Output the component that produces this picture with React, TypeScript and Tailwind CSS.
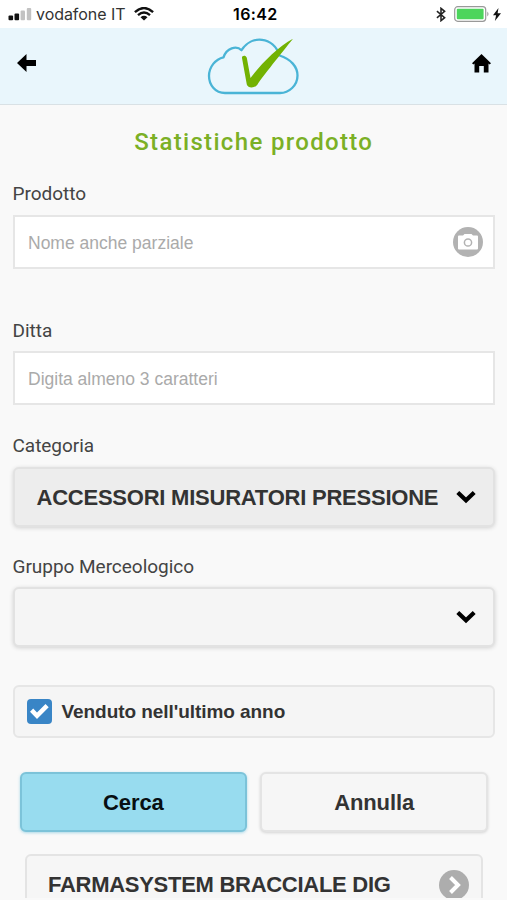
import type { ReactNode } from "react";

const roboto = "font-['Roboto',sans-serif]";

function Label({ children, className }: { children: ReactNode; className: string }) {
  return (
    <label className={`${roboto} block h-6 whitespace-nowrap text-[19px] leading-6 tracking-[-0.03px] text-[#444] ${className}`}>
      {children}
    </label>
  );
}

function StatusBar() {
  return (
    <div className="flex h-7 items-center bg-white pl-2 pr-1.5 text-[#222]">
      <svg className="h-[14px] w-6 shrink-0" viewBox="0 0 24 14">
        <rect x="0.5" y="8.5" width="4.6" height="4.8" rx="1" fill="#111" />
        <rect x="6.5" y="6.5" width="4.6" height="6.8" rx="1" fill="#111" />
        <rect x="12.6" y="3.5" width="4.4" height="9.8" rx="1" fill="#c2c2c2" />
        <rect x="18.8" y="1" width="4.4" height="12.3" rx="1" fill="#c2c2c2" />
      </svg>
      <span className="ml-1 w-[98px] whitespace-nowrap font-['Inter',sans-serif] text-[16px] tracking-[-0.05px] text-[#333]">vodafone IT</span>
      <svg className="h-[14px] w-5 shrink-0" viewBox="0 0 20 14" fill="none" stroke="#111" strokeWidth="2.4">
        <path d="M.9 5.1Q10-3 19.1 5.1M4 8.2Q10 3 16 8.2" />
        <path d="M6.5 10.2Q10 7.4 13.5 10.2L10 13.5Z" fill="#111" stroke="none" />
      </svg>
      <span className="ml-[79px] w-[60px] whitespace-nowrap font-['Inter',sans-serif] text-[16px] font-semibold tracking-[0.4px] text-black">16:42</span>
      <svg className="ml-auto h-[15px] w-[10px] shrink-0" viewBox="0 0 11 16" fill="none" stroke="#222" strokeWidth="1.7">
        <path d="M1 4.3 9.5 11.5 5.5 14.8V1.2L9.5 4.5 1 11.7" />
      </svg>
      <svg className="ml-2 h-4 w-9 shrink-0" viewBox="0 0 36 16">
        <rect x="0.7" y="0.7" width="31" height="14.6" rx="3" fill="#fff" stroke="#999" strokeWidth="1.2" />
        <rect x="2.8" y="2.8" width="26.8" height="10.4" rx="1" fill="#4cd55c" />
        <path d="M33.400 5.500Q35.500 8 33.400 10.500Z" fill="#888" />
      </svg>
      <svg className="ml-[3px] h-[13px] w-2 shrink-0" viewBox="0 0 8 13">
        <path d="M5.5 0 0 7.2H3.1L1.9 13 8 5.3H4.6Z" fill="#111" />
      </svg>
    </div>
  );
}

function Header() {
  return (
    <header className="flex h-[77px] items-start justify-between border-b border-[#d9e1e5] bg-[#e9f6fc] pl-[17px] pr-4">
      <svg className="mt-[26px] h-[18px] w-5" viewBox="0 0 20 18">
        <path d="M0 9 9.5 0V6H19V12H9.5V18Z" />
      </svg>
      <svg className="mt-[7px] mr-[3px] h-[62px] w-[92px]" viewBox="0 0 92 62" fill="none">
        <path d="M16.500 22.300C19.500 13 29.500 10 34.500 15.200C44.500-.5 66.500 1.500 72.500 20.500C84 24 90.500 32 90.500 40.500C90.500 50.500 82 58 73 58H18C8 58 2 49.500 2 41C2 32 8.500 24 16.500 22.300Z" stroke="#4ab4d6" strokeWidth="2.3" strokeLinejoin="round" />
        <path d="M35 23C34.600 20.300 38.800 19.700 39.800 22.800L43.500 43C52 31.500 70.500 11.500 86 3.800C75 17.500 55 42.500 50.500 49.500C48.500 53.100 41 53.800 39.800 49.500Z" fill="#72b202" />
      </svg>
      <svg className="mt-[26px] h-[19px] w-[19px]" viewBox="0 0 19 19">
        <path d="M9.500 0 19 9.200 17.600 10.600 16.500 9.600V18.500H11.800V12H7.200V18.500H2.500V9.600L1.400 10.600 0 9.200Z" />
      </svg>
    </header>
  );
}

function SelectBox({ text, className }: { text: string; className: string }) {
  return (
    <button className={`flex h-[60px] w-full items-center justify-between rounded-[6px] border-2 border-[#e2e2e2] pl-[22px] pr-[17px] shadow-[0_1px_4px_rgba(0,0,0,0.16)] ${className}`}>
      <span className="whitespace-nowrap text-[22px] font-bold tracking-[-0.23px]">{text}</span>
      <svg className="h-[14px] w-5" viewBox="0 0 20 14" fill="none" stroke="#000" strokeWidth="4.200">
        <path d="M1.800 2.500 10 10.300 18.200 2.500" />
      </svg>
    </button>
  );
}

export default function App() {
  return (
    <div className="flex h-[900px] w-[507px] flex-col overflow-hidden bg-[#f9f9f9] font-['Liberation_Sans',sans-serif] text-[#333]">
      <StatusBar />
      <Header />
      <main className="h-[793px] overflow-hidden pl-[12.500px] pr-3">
        <h1 className={`${roboto} mt-[21px] h-8 whitespace-nowrap text-center text-[24px] font-medium leading-8 tracking-[1.330px] text-[#7bb026]`}>
          Statistiche prodotto
        </h1>

        <Label className="mt-6">Prodotto</Label>
        <div className="mt-[9px] flex h-[54px] items-center justify-between border-2 border-[#e6e6e6] bg-white pl-[13.500px] pr-[10px]">
          <span className="whitespace-nowrap pt-0.5 text-[17.500px] text-[#aaa]">Nome anche parziale</span>
          <svg className="h-[30px] w-[30px]" viewBox="0 0 30 30">
            <circle cx="15" cy="15" r="15" fill="#b2b2b2" />
            <path d="M5 9.500Q5 8.500 6 8.500H10L11.500 7H18.500L20 8.500H24Q25 8.500 25 9.500V21.500Q25 22.500 24 22.500H6Q5 22.500 5 21.500Z" fill="#fff" />
            <circle cx="15" cy="15.500" r="3.600" fill="#fff" stroke="#b2b2b2" strokeWidth="1.500" />
          </svg>
        </div>

        <Label className="mt-[50px]">Ditta</Label>
        <div className="mt-2 flex h-[54px] items-center border-2 border-[#e6e6e6] bg-white pl-[13.500px]">
          <span className="whitespace-nowrap pt-0.5 text-[17.500px] text-[#aaa]">Digita almeno 3 caratteri</span>
        </div>

        <Label className="mt-[29px]">Categoria</Label>
        <SelectBox text="ACCESSORI MISURATORI PRESSIONE" className="mt-[9px] bg-[#ededed]" />

        <Label className="mt-7">Gruppo Merceologico</Label>
        <SelectBox text="" className="mt-2 bg-[#f5f5f5]" />

        <div className="mt-[38px] flex h-[53px] items-center rounded-[6px] border-2 border-[#e6e6e6] bg-[#f5f5f5] pl-[12.500px]">
          <span className="flex h-[25px] w-[25px] items-center justify-center rounded-[4px] bg-[#3985c6]">
            <svg className="h-[17px] w-[19px]" viewBox="0 0 19 17">
              <path d="M0 8.800 3.200 5.600 7 9.400 15.500 1 18.700 4.200 7 15.900Z" fill="#fff" />
            </svg>
          </span>
          <span className="ml-[9.500px] whitespace-nowrap pt-px text-[19px] font-bold tracking-[-0.06px]">Venduto nell'ultimo anno</span>
        </div>

        <div className="mt-[34px] flex gap-[13px] px-[7px] text-[22px] font-bold tracking-[-0.1px]">
          <button className="h-[60px] flex-1 rounded-[6px] border-2 border-[#7cc3d9] bg-[#98dcef] text-[#080f12] shadow-[0_1px_3px_rgba(56,170,210,0.4)]">Cerca</button>
          <button className="h-[60px] flex-1 rounded-[6px] border-2 border-[#e4e4e4] bg-[#f6f6f6] shadow-[0_1px_3px_rgba(0,0,0,0.15)]">Annulla</button>
        </div>

        <div className="mx-3 mt-[22px] flex h-[61px] items-center justify-between rounded-[6px] border-2 border-[#e4e4e4] bg-[#f6f6f6] pl-[21.500px] pr-3">
          <span className="whitespace-nowrap text-[22px] font-bold tracking-[-0.280px]">FARMASYSTEM BRACCIALE DIG</span>
          <svg className="h-[30px] w-[30px]" viewBox="0 0 30 30" fill="none">
            <circle cx="15" cy="15" r="15" fill="#adadad" />
            <path d="M11.500 7.500 19 15 11.500 22.500" stroke="#fff" strokeWidth="4" />
          </svg>
        </div>
      </main>
    </div>
  );
}
